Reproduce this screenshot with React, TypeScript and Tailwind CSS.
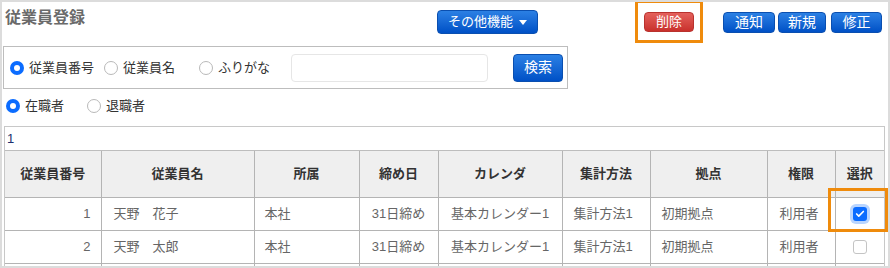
import { Check } from "lucide-react";

type Row = {
	no: number;
	name: string;
	dept: string;
	close: string;
	cal: string;
	agg: string;
	base: string;
	role: string;
	checked: boolean;
};

const rows: Row[] = [
	{ no: 1, name: "天野　花子", dept: "本社", close: "31日締め", cal: "基本カレンダー1", agg: "集計方法1", base: "初期拠点", role: "利用者", checked: true },
	{ no: 2, name: "天野　太郎", dept: "本社", close: "31日締め", cal: "基本カレンダー1", agg: "集計方法1", base: "初期拠点", role: "利用者", checked: false },
];

const headers = ["従業員番号", "従業員名", "所属", "締め日", "カレンダ", "集計方法", "拠点", "権限", "選択"];
const widths = ["w-[96px]", "w-[153px]", "w-[105px]", "w-[79px]", "w-[124px]", "w-[88px]", "w-[117px]", "w-[68px]", "w-[49px]"];

const blueBtn =
	"flex items-center justify-center rounded-[4px] border border-[#0a4fb0] bg-linear-to-b from-[#2b80e4] to-[#0050c6] text-white";

function Radio({ on, label }: { on: boolean; label: string }) {
	return (
		<label className="flex items-center gap-[5px] text-[13px] text-[#333]">
			{on ? (
				<span className="flex h-[14px] w-[14px] items-center justify-center rounded-full bg-[#0b6cff]">
					<span className="h-[6px] w-[6px] rounded-full bg-white" />
				</span>
			) : (
				<span className="h-[14px] w-[14px] rounded-full border border-[#b9b9b9] bg-white" />
			)}
			{label}
		</label>
	);
}

export default function App() {
	return (
		<div
			className="relative h-[268px] w-[890px] overflow-hidden border-2 border-[#dcdcdc] bg-white"
			style={{ fontFamily: '"Liberation Sans", "Noto Sans CJK JP", sans-serif' }}
		>
			{/* top bar */}
			<div className="flex h-[42px] items-start">
				<h1 className="ml-[3px] mt-[4px] w-[432px] text-[16px] font-bold text-[#6a6a6a]">従業員登録</h1>
				<button type="button" className={`${blueBtn} mt-[8px] h-[24px] w-[101px] gap-[6px] text-[13px]`}>
					その他機能
					<span className="h-0 w-0 border-x-[4px] border-t-[5px] border-x-transparent border-t-white" />
				</button>
				<button
					type="button"
					className="ml-[106px] mt-[10px] flex h-[20px] w-[50px] items-center justify-center rounded-[4px] border border-[#b9322e] bg-linear-to-b from-[#e4605b] to-[#c9302c] text-[13px] text-white"
				>
					削除
				</button>
				<div className="ml-[29px] mt-[10px] flex">
					<button type="button" className={`${blueBtn} h-[21px] w-[52px] text-[14px]`}>
						通知
					</button>
					<button type="button" className={`${blueBtn} ml-[3px] h-[21px] w-[48px] text-[14px]`}>
						新規
					</button>
					<button type="button" className={`${blueBtn} ml-[5px] h-[21px] w-[51px] text-[14px]`}>
						修正
					</button>
				</div>
			</div>

			{/* search box */}
			<div className="ml-[1px] mt-[2px] flex h-[43px] w-[565px] items-center border border-[#bdbdbd] pl-[6px]">
				<div className="flex w-[281px] items-center gap-[10px]">
					<Radio on label="従業員番号" />
					<Radio on={false} label="従業員名" />
					<span className="ml-[14px]">
						<Radio on={false} label="ふりがな" />
					</span>
				</div>
				<input type="text" className="h-[28px] w-[197px] rounded-[4px] border border-[#e6e6e6]" />
				<button type="button" className={`${blueBtn} ml-[25px] h-[28px] w-[50px] text-[14px]`}>
					検索
				</button>
			</div>

			{/* status */}
			<div className="ml-[4px] mt-[9px] flex h-[16px] items-center gap-[23px]">
				<Radio on label="在職者" />
				<Radio on={false} label="退職者" />
			</div>

			{/* table */}
			<div className="ml-[2px] mt-[12px] w-[881px] border-l border-r border-t border-[#c8c8c8]">
				<div className="flex h-[24px] items-center border-b border-[#bdbdbd] pl-[2px] text-[13px] text-[#1c2f6e]">1</div>
				<table className="w-[879px] table-fixed border-collapse text-[13px]">
					<thead>
						<tr className="h-[46px] bg-[#efefef]">
							{headers.map((h, i) => (
								<th
									key={h}
									className={`${widths[i]} border-b border-r border-[#b4b4b4] text-center font-bold text-[#333] last:border-r-0`}
								>
									{h}
								</th>
							))}
						</tr>
					</thead>
					<tbody className="text-[#666]">
						{rows.map((r) => (
							<tr key={r.no} className="h-[33px]">
								<td className="border-b border-r border-[#b4b4b4] pr-[10px] text-right">{r.no}</td>
								<td className="border-b border-r border-[#b4b4b4] pl-[12px]">{r.name}</td>
								<td className="border-b border-r border-[#b4b4b4] pl-[10px]">{r.dept}</td>
								<td className="border-b border-r border-[#b4b4b4] text-center">{r.close}</td>
								<td className="border-b border-r border-[#b4b4b4] text-center">{r.cal}</td>
								<td className="border-b border-r border-[#b4b4b4] pl-[11px]">{r.agg}</td>
								<td className="border-b border-r border-[#b4b4b4] pl-[11px]">{r.base}</td>
								<td className="border-b border-r border-[#b4b4b4] pr-[4px] text-center">{r.role}</td>
								<td className="border-b border-[#b4b4b4]">
									<div className="flex justify-center">
										{r.checked ? (
											<span className="flex h-[14px] w-[14px] items-center justify-center rounded-[3px] bg-[#0b6cff] ring-[3px] ring-[#b9d5ff]">
												<Check className="h-[10px] w-[10px] text-white" strokeWidth={4} />
											</span>
										) : (
											<span className="h-[14px] w-[14px] rounded-[3px] border border-[#c4c4c4] bg-white" />
										)}
									</div>
								</td>
							</tr>
						))}
						<tr className="h-[33px]">
							{widths.map((w, i) => (
								<td key={w + i} className="border-r border-[#b4b4b4] last:border-r-0" />
							))}
						</tr>
					</tbody>
				</table>
			</div>

			{/* highlight overlays */}
			<div className="absolute left-[633px] top-[-2px] h-[43px] w-[68px] border-[3px] border-[#ef8b0c]" />
			<div className="absolute left-[826px] top-[186px] h-[44px] w-[60px] border-[3px] border-[#ef8b0c]" />
		</div>
	);
}
